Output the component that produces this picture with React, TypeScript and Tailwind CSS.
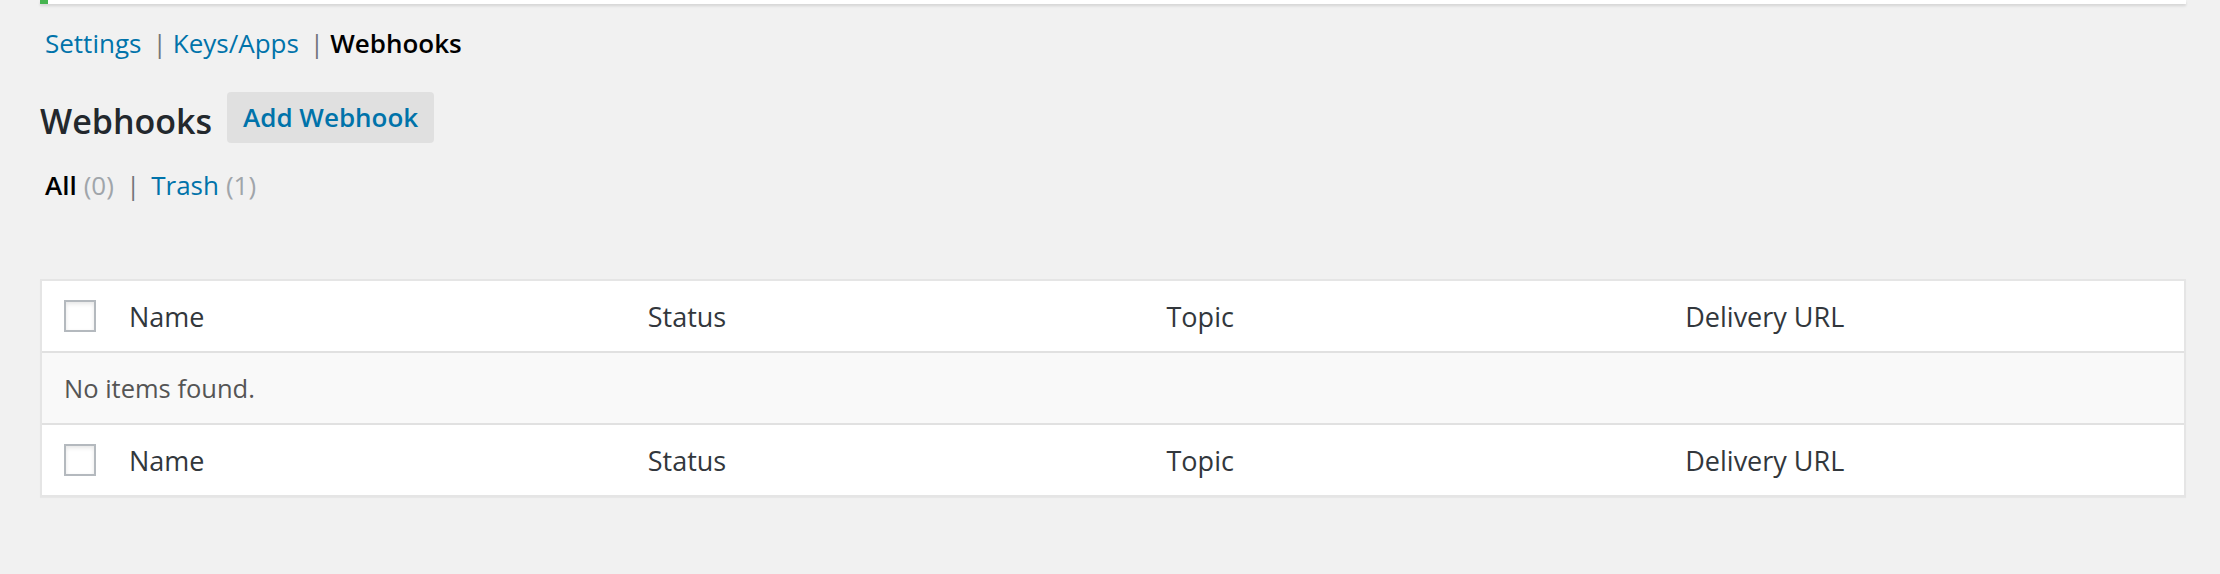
const cols = ["Name", "Status", "Topic", "Delivery URL"]

function Checkbox() {
  return (
    <span className="block w-8 h-8 bg-white border-2 border-[#b4b9be] shadow-[inset_0_2px_4px_rgba(0,0,0,0.1)]" />
  )
}

function HeaderRow() {
  return (
    <div className="flex h-[70px] items-center bg-white text-[27px] text-[#32373c]">
      <div className="w-[67px] shrink-0 pl-[22px]">
        <Checkbox />
      </div>
      {cols.map((c) => (
        <div key={c} className="flex-1 pl-5">
          {c}
        </div>
      ))}
    </div>
  )
}

export default function App() {
  return (
    <div
      className="min-h-[574px] bg-[#f1f1f1] pl-10 pr-[34px] text-[26px] leading-[37px]"
      style={{ fontFamily: '"Open Sans", "Noto Sans", sans-serif' }}
    >
      {/* Notice (scrolled off) */}
      <div className="h-1 bg-white border-l-8 border-[#46b450] shadow-[0_2px_3px_rgba(0,0,0,0.12)]" />

      {/* Section links */}
      <div className="mt-[21px] pl-[5px] flex items-center">
        <a className="text-[#0073aa]">Settings</a>
        <span className="ml-[11px] mr-[6px] text-[#72777c]">|</span>
        <a className="text-[#0073aa]">Keys/Apps</a>
        <span className="ml-[11px] mr-[6px] text-[#72777c]">|</span>
        <span className="font-semibold text-black">Webhooks</span>
      </div>

      {/* Title + action */}
      <div className="mt-[30px] flex items-start">
        <h1 className="mt-[6px] text-[34px] leading-[46px] font-semibold text-[#23282d]">Webhooks</h1>
        <button className="ml-[15px] h-[51px] px-4 rounded-[4px] bg-[#e0e0e0] font-semibold text-[#0073aa]">
          Add Webhook
        </button>
      </div>

      {/* Status filters */}
      <div className="mt-[23px] pl-[5px] flex items-center">
        <span className="font-semibold text-black">All</span>
        <span className="ml-[7px] text-[#a0a5aa]">(0)</span>
        <span className="ml-[12px] mr-[11px] text-[#72777c]">|</span>
        <a className="text-[#0073aa]">Trash</a>
        <span className="ml-[7px] text-[#a0a5aa]">(1)</span>
      </div>

      {/* List table */}
      <div className="mt-[75px] border-2 border-[#e5e5e5] shadow-[0_1px_1px_rgba(0,0,0,0.04)]">
        <HeaderRow />
        <div className="flex h-[74px] items-center border-y-2 border-[#e1e1e1] bg-[#f9f9f9] pl-[22px] text-[25.5px] text-[#555]">
          No items found.
        </div>
        <HeaderRow />
      </div>
    </div>
  )
}
